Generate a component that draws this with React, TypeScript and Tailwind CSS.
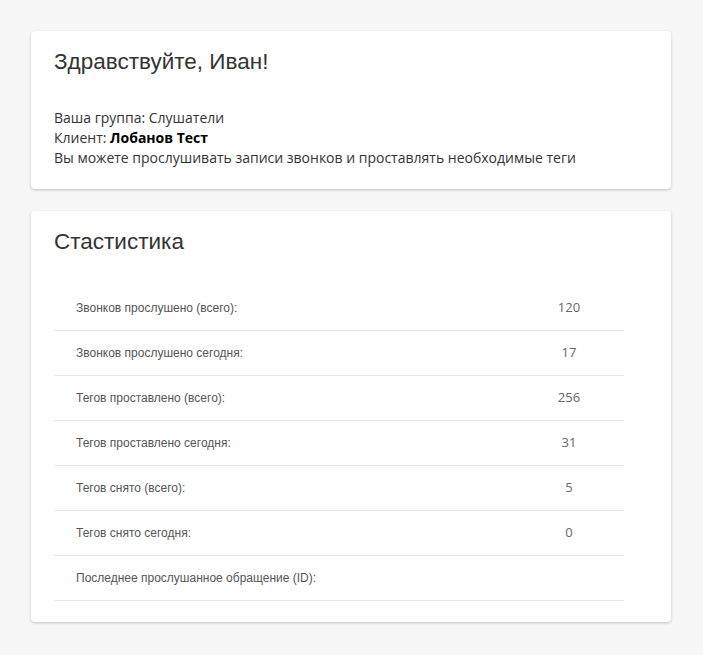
import React from 'react';

const stats: { label: string; value: string }[] = [
  { label: 'Звонков прослушено (всего):', value: '120' },
  { label: 'Звонков прослушено сегодня:', value: '17' },
  { label: 'Тегов проставлено (всего):', value: '256' },
  { label: 'Тегов проставлено сегодня:', value: '31' },
  { label: 'Тегов снято (всего):', value: '5' },
  { label: 'Тегов снято сегодня:', value: '0' },
  { label: 'Последнее прослушанное обращение (ID):', value: '' },
];

function Card({ children }: { children: React.ReactNode }) {
  return (
    <div className="rounded-[4px] bg-white px-[23px] pt-[16px] pb-[21px] shadow-[0_1px_3px_rgba(0,0,0,0.22)]">
      {children}
    </div>
  );
}

export default function App() {
  return (
    <div className="min-h-[655px] bg-[#f7f7f7] pl-[31px] pt-[31px] pb-[32px] pr-[32px]">
      <div className="flex flex-col gap-[22px]">
        <Card>
          <h1 className="font-['Liberation_Sans',Arial,sans-serif] text-[22.5px] leading-[30px] text-[#333]">
            Здравствуйте, Иван!
          </h1>
          <div className="mt-[31px] font-['Open_Sans',sans-serif] text-[14px] leading-[20px] text-[#333]">
            <div>Ваша группа: Слушатели</div>
            <div>
              Клиент: <b className="font-bold text-black">Лобанов Тест</b>
            </div>
            <div>Вы можете прослушивать записи звонков и проставлять необходимые теги</div>
          </div>
        </Card>

        <Card>
          <h2 className="font-['Liberation_Sans',Arial,sans-serif] text-[22.5px] leading-[30px] text-[#333]">
            Стастистика
          </h2>
          <div className="mt-[29px] w-[570px]">
            {stats.map((s) => (
              <div key={s.label} className="flex h-[45px] items-center border-b border-[#e6e6e6]">
                <div className="flex-1 pl-[22px] font-['Liberation_Sans',Arial,sans-serif] text-[12px] text-[#555]">
                  {s.label}
                </div>
                <div className="w-[110px] text-center font-['Open_Sans',sans-serif] text-[13px] text-[#666]">
                  {s.value}
                </div>
              </div>
            ))}
          </div>
        </Card>
      </div>
    </div>
  );
}
